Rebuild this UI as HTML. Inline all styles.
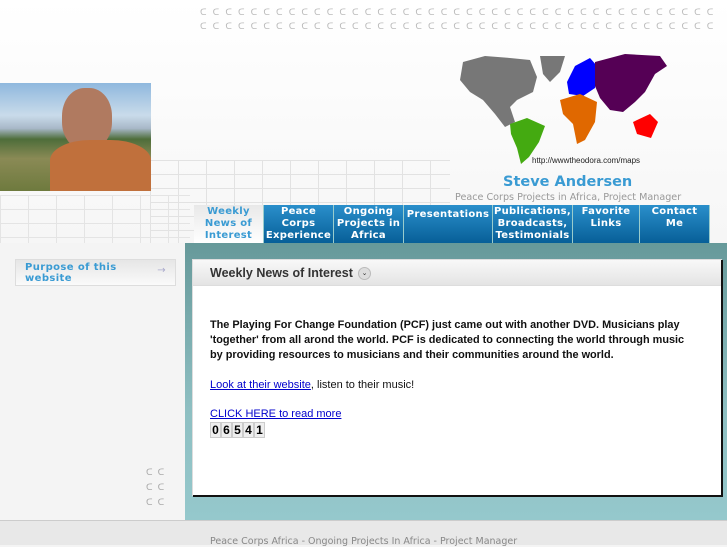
<!DOCTYPE html>
<html><head><meta charset="utf-8"><style>
*{margin:0;padding:0;box-sizing:border-box}
body{width:727px;height:545px;overflow:hidden;background:#f4f4f4;font-family:"DejaVu Sans","Liberation Sans",sans-serif;position:relative}
.abs{position:absolute}
.dots{left:200px;top:6px;width:527px;height:28px;font-size:9px;color:#bbb;letter-spacing:6.1px;line-height:14px;white-space:nowrap;overflow:hidden;font-family:"DejaVu Sans",sans-serif}
.grid{left:150px;top:160px;width:300px;height:83px;background-image:linear-gradient(#e2e2e2 1px,transparent 1px),linear-gradient(90deg,#e2e2e2 1px,transparent 1px);background-size:28px 14px}
.nav{top:205px;height:38px;background:linear-gradient(#2a8fcb,#075f98);color:#fff;font-size:10px;font-weight:bold;text-align:center;line-height:12px;padding-top:1px;border-right:1px solid #9cc;letter-spacing:0.3px}
.nav.on{background:linear-gradient(#e8e8e8,#fff);color:#3a9bd3}
</style></head><body>
<div class="abs" style="left:0;top:0;width:727px;height:243px;background:linear-gradient(#fff,#f6f6f6)"></div>
<div class="abs dots">ᑕᑕᑕᑕᑕᑕᑕᑕᑕᑕᑕᑕᑕᑕᑕᑕᑕᑕᑕᑕᑕᑕᑕᑕᑕᑕᑕᑕᑕᑕᑕᑕᑕᑕᑕᑕᑕᑕᑕᑕᑕ<br>ᑕᑕᑕᑕᑕᑕᑕᑕᑕᑕᑕᑕᑕᑕᑕᑕᑕᑕᑕᑕᑕᑕᑕᑕᑕᑕᑕᑕᑕᑕᑕᑕᑕᑕᑕᑕᑕᑕᑕᑕᑕ</div>
<div class="abs grid"></div>
<div class="abs" style="left:0;top:195px;width:190px;height:48px;background-image:linear-gradient(#e4e4e4 1px,transparent 1px),linear-gradient(90deg,#e4e4e4 1px,transparent 1px);background-size:28px 14px"></div>
<div class="abs" style="left:0;top:83px;width:151px;height:108px;background:linear-gradient(#8fb8de 0,#c9dbea 30%,#a8b8c8 42%,#4e6d3a 52%,#8a8a55 70%,#6e7a3e 100%)"></div>
<div class="abs" style="left:62px;top:88px;width:50px;height:62px;border-radius:45%;background:#b07a60"></div>
<div class="abs" style="left:50px;top:140px;width:101px;height:51px;border-radius:40% 40% 0 0;background:#c0703c"></div>
<svg class="abs" style="left:455px;top:52px" width="272" height="120" viewBox="0 0 272 120">
<path d="M8,10 L30,4 L55,6 L75,8 L82,25 L78,40 L62,48 L55,55 L60,70 L50,75 L40,62 L28,48 L15,40 L5,28Z" fill="#777"/>
<path d="M85,4 L110,4 L105,20 L95,30 L88,22Z" fill="#777"/>
<path d="M55,72 L72,66 L90,74 L84,90 L74,105 L66,112 L62,96 L56,82Z" fill="#4a1"/>
<path d="M112,30 L120,14 L135,6 L142,14 L140,36 L128,44 L114,42Z" fill="#00f"/>
<path d="M140,10 L170,2 L205,4 L212,14 L200,22 L190,40 L180,50 L168,60 L155,58 L145,46 L140,34Z" fill="#505"/>
<path d="M105,48 L125,42 L142,50 L140,70 L130,88 L122,92 L118,72 L108,62Z" fill="#e06800"/>
<path d="M178,70 L195,62 L203,70 L196,86 L182,82Z" fill="#f00"/>
<text x="77" y="111" font-size="8" fill="#222" font-family="Liberation Sans,sans-serif">http://wwwtheodora.com/maps</text>
</svg>
<div class="abs" style="left:503px;top:174px;font-size:14.5px;font-weight:bold;color:#3a9bd3">Steve Andersen</div>
<div class="abs" style="left:455px;top:192px;font-size:9.6px;color:#999;white-space:nowrap">Peace Corps Projects in Africa, Project Manager</div>
<div class="abs nav on" style="left:194px;width:70px">Weekly<br>News of<br>Interest</div>
<div class="abs nav" style="left:264px;width:70px">Peace<br>Corps<br>Experience</div>
<div class="abs nav" style="left:334px;width:70px">Ongoing<br>Projects in<br>Africa</div>
<div class="abs nav" style="left:404px;width:89px;padding-top:4px">Presentations</div>
<div class="abs nav" style="left:493px;width:80px">Publications,<br>Broadcasts,<br>Testimonials</div>
<div class="abs nav" style="left:573px;width:67px">Favorite<br>Links</div>
<div class="abs nav" style="left:640px;width:70px">Contact<br>Me</div>
<div class="abs" style="left:15px;top:259px;width:161px;height:27px;border:1px solid #ddd;background:linear-gradient(#e6e6e6,#fafafa);color:#3a9bd3;font-size:10px;font-weight:bold;line-height:11px;padding:2px 0 0 9px;letter-spacing:0.4px">Purpose of this<br>website<span style="position:absolute;right:9px;top:5px;color:#aac;font-weight:normal">→</span></div>
<div class="abs" style="left:146px;top:466px;font-size:9px;color:#aaa;line-height:15px;letter-spacing:5px">ᑕᑕ<br>ᑕᑕ<br>ᑕᑕ</div>
<div class="abs" style="left:185px;top:243px;width:542px;height:277px;background:linear-gradient(#66999a,#8ebfc2 60%,#95c8cc)"></div>
<div class="abs" style="left:193px;top:260px;width:530px;height:237px;background:#fff;border-right:2px solid #111;border-bottom:2px solid #111;box-shadow:-1px -1px 0 #ddd"></div>
<div class="abs" style="left:193px;top:260px;width:528px;height:26px;background:linear-gradient(#f8f8f8,#e4e4e4);border-bottom:1px solid #ddd"></div>
<div class="abs" style="left:210px;top:266px;font-family:'Liberation Sans',sans-serif;font-size:12.5px;font-weight:bold;color:#333">Weekly News of Interest</div>
<div class="abs" style="left:358px;top:267px;width:13px;height:13px;border-radius:50%;background:#ddd;border:1px solid #bbb;font-size:7px;text-align:center;line-height:11px;color:#333">⌄</div>
<div class="abs" style="left:210px;top:318px;width:480px;font-family:'Liberation Sans',sans-serif;font-size:10.9px;font-weight:bold;line-height:15px;color:#111">The Playing For Change Foundation (PCF) just came out with another DVD. Musicians play 'together' from all arond the world. PCF is dedicated to connecting the world through music by providing resources to musicians and their communities around the world.</div>
<div class="abs" style="left:210px;top:379px;font-family:'Liberation Sans',sans-serif;font-size:11px;color:#111"><span style="color:#00c;text-decoration:underline">Look at their website</span>, listen to their music!</div>
<div class="abs" style="left:210px;top:408px;font-family:'Liberation Sans',sans-serif;font-size:11px;color:#00c;text-decoration:underline">CLICK HERE to read more</div>
<div class="abs" style="left:210px;top:422px;font-family:'Liberation Sans',sans-serif;font-size:12px;font-weight:bold;letter-spacing:0">
<span style="display:inline-block;width:11px;text-align:center;border:1px solid #ccc;background:#eee">0</span><span style="display:inline-block;width:11px;text-align:center;border:1px solid #ccc;background:#eee">6</span><span style="display:inline-block;width:11px;text-align:center;border:1px solid #ccc;background:#eee">5</span><span style="display:inline-block;width:11px;text-align:center;border:1px solid #ccc;background:#eee">4</span><span style="display:inline-block;width:11px;text-align:center;border:1px solid #ccc;background:#eee">1</span></div>
<div class="abs" style="left:0;top:520px;width:727px;height:25px;background:#e8e8e8;border-top:1px solid #ccc"></div>
<div class="abs" style="left:210px;top:536px;font-size:9.5px;color:#888;white-space:nowrap">Peace Corps Africa - Ongoing Projects In Africa - Project Manager</div>
</body></html>
